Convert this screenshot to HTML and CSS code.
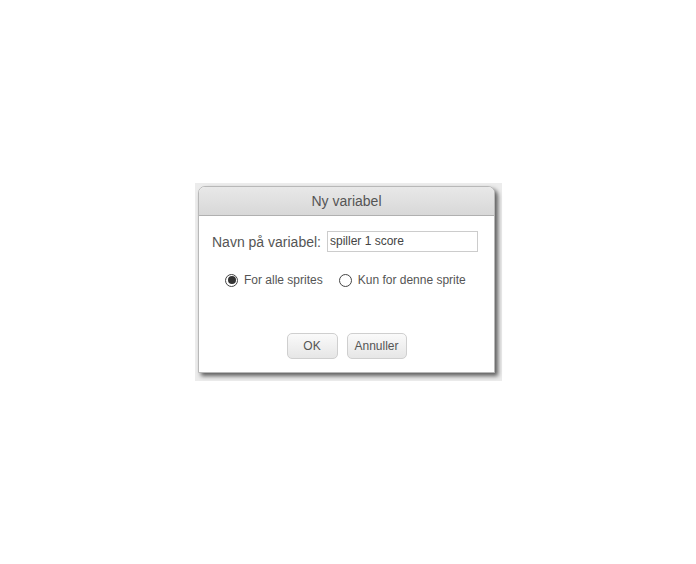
FILE: index.html
```html
<!DOCTYPE html>
<html>
<head>
<meta charset="utf-8">
<link rel="stylesheet" href="styles.css">
</head>
<body>
<div class="backdrop">
  <div class="dialog">
    <div class="title">Ny variabel</div>
    <div class="content">
      <div class="name-row">
        <span class="label">Navn på variabel:</span>
        <div class="input">spiller 1 score</div>
      </div>
      <div class="radio-row">
        <span class="radio checked"></span><span class="rlabel">For alle sprites</span>
        <span class="radio second"></span><span class="rlabel">Kun for denne sprite</span>
      </div>
      <div class="buttons">
        <div class="btn ok">OK</div>
        <div class="btn cancel">Annuller</div>
      </div>
    </div>
  </div>
</div>
</body>
</html>
```
FILE: styles.css
```css
html, body {
  margin: 0;
  padding: 0;
  background: #ffffff;
  font-family: "Liberation Sans", Arial, sans-serif;
}
body {
  width: 696px;
  height: 564px;
}
.backdrop {
  position: absolute;
  left: 195px;
  top: 183px;
  width: 307px;
  height: 198px;
  background: #ececec;
}
.dialog {
  margin: 3px 0 0 3px;
  width: 295px;
  height: 185px;
  background: #ffffff;
  border: 1px solid #b8b8b8;
  border-radius: 7px 7px 0 0;
  box-shadow: 3px 3px 4px rgba(0, 0, 0, 0.6);
  display: flex;
  flex-direction: column;
}
.title {
  height: 28px;
  line-height: 29px;
  text-align: center;
  font-size: 14px;
  color: #555555;
  background: linear-gradient(#e8e8e8, #d8d8d8);
  border-radius: 6px 6px 0 0;
  border-bottom: 1px solid #b0b0b0;
}
.content {
  display: flex;
  flex-direction: column;
  padding: 15px 0 0 13px;
}
.name-row {
  display: flex;
  align-items: center;
}
.label {
  font-size: 14px;
  color: #555555;
}
.input {
  margin-left: 6px;
  width: 147px;
  height: 19px;
  border: 1px solid #cccccc;
  font-size: 12px;
  line-height: 18px;
  color: #444444;
  padding-left: 2px;
  box-sizing: content-box;
}
.radio-row {
  display: flex;
  align-items: center;
  margin-top: 21px;
  padding-left: 13px;
}
.radio {
  width: 13px;
  height: 13px;
  border: 1px solid #444444;
  border-radius: 50%;
  background: #ffffff;
  box-sizing: border-box;
  display: inline-flex;
  align-items: center;
  justify-content: center;
}
.radio.checked::after {
  content: "";
  width: 8px;
  height: 8px;
  border-radius: 50%;
  background: #333333;
}
.radio.second {
  margin-left: 16px;
}
.rlabel {
  margin-left: 6px;
  font-size: 12px;
  color: #555555;
}
.buttons {
  display: flex;
  justify-content: center;
  gap: 9px;
  margin-top: 46px;
  margin-left: -13px;
}
.btn {
  height: 24px;
  line-height: 24px;
  border: 1px solid #cfcfcf;
  border-radius: 5px;
  background: linear-gradient(#fafafa, #e6e6e6);
  font-size: 12px;
  color: #555555;
  text-align: center;
}
.ok {
  width: 49px;
}
.cancel {
  width: 58px;
}
```
